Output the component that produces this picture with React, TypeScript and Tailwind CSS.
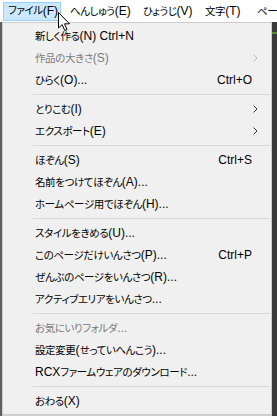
import React from 'react';

type Item =
  | { sep: true }
  | { label: string; shortcut?: string; sub?: boolean; disabled?: boolean; sep?: false };

const items: Item[] = [
  { label: '新しく作る(N) Ctrl+N' },
  { label: '作品の大きさ(S)', sub: true, disabled: true },
  { label: 'ひらく(O)...', shortcut: 'Ctrl+O' },
  { sep: true },
  { label: 'とりこむ(I)', sub: true },
  { label: 'エクスポート(E)', sub: true },
  { sep: true },
  { label: 'ほぞん(S)', shortcut: 'Ctrl+S' },
  { label: '名前をつけてほぞん(A)...' },
  { label: 'ホームページ用でほぞん(H)...' },
  { sep: true },
  { label: 'スタイルをきめる(U)...' },
  { label: 'このページだけいんさつ(P)...', shortcut: 'Ctrl+P' },
  { label: 'ぜんぶのページをいんさつ(R)...' },
  { label: 'アクティブエリアをいんさつ...' },
  { sep: true },
  { label: 'お気にいりフォルダ...', disabled: true },
  { label: '設定変更(せっていへんこう)...' },
  { label: 'RCXファームウェアのダウンロード...' },
  { sep: true },
  { label: 'おわる(X)' },
];

const bar = [
  { t: 'へんしゅう(E)', w: 'w-[73px]' },
  { t: 'ひょうじ(V)', w: 'w-[62px]' },
  { t: '文字(T)', w: 'w-[52px]' },
  { t: 'ページ', w: 'w-[40px]' },
];

// latin in Arial widths, kana/kanji a touch smaller so runs come out as narrow as Meiryo UI
function Txt({ s }: { s: string }) {
  const runs = s.split(/([\x00-\x7F]+)/).filter(Boolean);
  return (
    <>
      {runs.map((r, i) =>
        /^[\x00-\x7F]+$/.test(r) ? (
          <span key={i} className="text-[12px] tracking-normal">
            {r}
          </span>
        ) : (
          <span key={i} className="text-[10.5px] tracking-[-0.4px]">
            {r}
          </span>
        )
      )}
    </>
  );
}

function Chevron({ dim }: { dim?: boolean }) {
  return (
    <svg width="5" height="8" viewBox="0 0 5 8" className="mr-[6px]">
      <path d="M0.5 0.5 L4 4 L0.5 7.5" fill="none" stroke={dim ? '#b8b8b8' : '#333'} strokeWidth="1" />
    </svg>
  );
}

function Cursor() {
  return (
    <svg className="absolute left-[58px] top-[12px]" width="13" height="20" viewBox="0 0 13 20">
      <path
        d="M0.5 0.5 L0.5 16 L4.2 12.6 L6.8 18.6 L9 17.6 L6.5 11.8 L11.5 11.8 Z"
        fill="#fff"
        stroke="#000"
        strokeWidth="1"
      />
    </svg>
  );
}

export default function App() {
  return (
    <div
      className="relative w-[277px] h-[416px] overflow-hidden bg-white text-[12px] text-black [font-feature-settings:'palt']"
      style={{ fontFamily: '"Liberation Sans", "Noto Sans CJK JP", sans-serif' }}
    >
      <div className="flex h-[22px] items-center whitespace-nowrap">
        <div className="ml-[3px] flex h-[19px] w-[58px] shrink-0 items-center border border-[#99d1ff] bg-[#cce8ff] pl-[4px]">
          <Txt s="ファイル(F)" />
        </div>
        {bar.map((b) => (
          <div key={b.t} className={`${b.w} shrink-0 pl-[9px]`}>
            <Txt s={b.t} />
          </div>
        ))}
      </div>

      <div className="flex h-[394px]">
        <div className="w-[2px] bg-[#5f5f5f]" />
        <div className="flex w-[270px] flex-col">
          <div className="flex flex-1 flex-col border border-[#cccccc] bg-[#f0f0f0] py-[2px]">
            {items.map((it, i) =>
              it.sep ? (
                <div key={i} className="flex h-[7px] items-center pl-[30px] pr-[1px]">
                  <div className="h-px w-full bg-[#d7d7d7]" />
                </div>
              ) : (
                <div
                  key={i}
                  className={`flex h-[22px] items-center pl-[32px] pr-[7px] whitespace-nowrap ${
                    it.disabled ? 'text-[#7a7a7a]' : ''
                  }`}
                >
                  <span className="flex-1">
                    <Txt s={it.label} />
                  </span>
                  {it.shortcut && <span className="mr-[12px]">{it.shortcut}</span>}
                  {it.sub && <Chevron dim={it.disabled} />}
                </div>
              )
            )}
          </div>
          <div className="h-[4px] bg-[#cfcfcf]" />
        </div>
        <div className="flex-1 bg-[#3a3a3a]">
          <div className="mt-[10px] h-[2px] w-full bg-[#5c8a3c]" />
        </div>
      </div>

      <Cursor />
    </div>
  );
}
